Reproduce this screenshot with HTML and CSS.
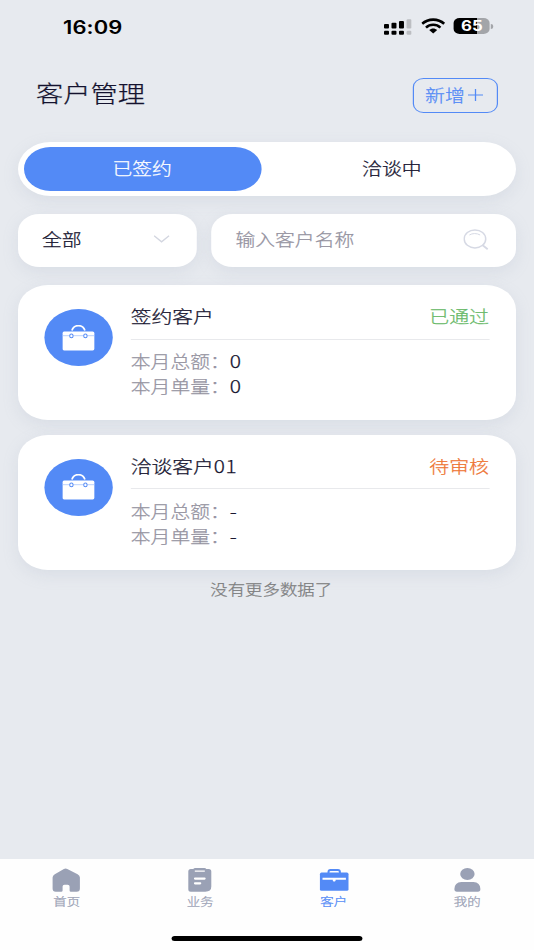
FILE: index.html
```html
<!DOCTYPE html>
<html lang="zh-CN">
  <head>
      <meta charset="UTF-8">
      <meta name="viewport" content="width=device-width, initial-scale=1.0">
      <title>客户管理</title>
      <link rel="stylesheet" href="styles.css">
  </head>
  <body>
      <div class="screen">
          <div class="status-bar">
              <span class="time">16:09</span>
              <div class="status-icons">
                  <svg class="signal" viewBox="0 0 28 16" preserveAspectRatio="none">
                      <g fill="#000">
                          <rect x="0" y="5" width="5" height="4.5" rx="1"/>
                          <rect x="7.5" y="3.8" width="5" height="5.7" rx="1"/>
                          <rect x="15" y="2" width="5" height="7.5" rx="1"/>
                          <rect x="0" y="11.7" width="5" height="4" rx="1"/>
                          <rect x="7.5" y="11.7" width="5" height="4" rx="1"/>
                          <rect x="15" y="11.7" width="5" height="4" rx="1"/>
                      </g>
                      <g fill="#bcbec2">
                          <rect x="22.6" y="0.3" width="5" height="9.2" rx="1.3"/>
                          <rect x="22.6" y="11.7" width="5" height="4" rx="1.3"/>
                      </g>
                  </svg>
                  <svg class="wifi" viewBox="0 0 24 16" preserveAspectRatio="none">
                      <g fill="none" stroke="#000" stroke-width="2.6">
                          <path d="M1 5.8C7 0.2 17 0.2 23 5.8"/>
                          <path d="M4.8 9.6C8.8 5.8 15.2 5.8 19.2 9.6"/>
                      </g>
                      <path d="M8 12C10.2 9.9 13.8 9.9 16 12L12 15.4Z" fill="#000"/>
                  </svg>
                  <div class="battery"><span class="level">65</span><i class="cap"></i></div>
              </div>
          </div>
          <header class="header">
              <h1 class="title">客户管理</h1>
              <button class="add-btn" type="button">新增<svg viewBox="0 0 15 15" preserveAspectRatio="none"><path d="M0 7.5H15M7.5 1V14" fill="none" stroke="currentColor" stroke-width="1.3"/></svg></button>
          </header>
          <main class="main">
              <div class="tabs">
                  <div class="tab active">已签约</div>
                  <div class="tab">洽谈中</div>
              </div>
              <div class="filter">
                  <div class="select">
                      <span>全部</span>
                      <svg class="arrow" viewBox="0 0 16 8" preserveAspectRatio="none"><path d="M0.5 0.8L8 6.8L15.5 0.8" fill="none" stroke="#d3d6e0" stroke-width="1.4"/></svg>
                  </div>
                  <div class="search">
                      <span>输入客户名称</span>
                      <svg class="search-icon" viewBox="0 0 26 21" preserveAspectRatio="none">
                          <g fill="none" stroke="#d6d9e4">
                              <ellipse cx="11.8" cy="9.9" rx="10.8" ry="9" stroke-width="1.5"/>
                              <path d="M6.2 6C9 4.1 14 4.1 17 6" stroke-width="1"/>
                              <path d="M19.2 16L24.6 20.3" stroke-width="1.8"/>
                          </g>
                      </svg>
                  </div>
              </div>
              <div class="card">
                  <div class="avatar">
                      <svg viewBox="0 0 32 26" preserveAspectRatio="none">
                          <path d="M9.5 5.6C11.5 -1 20.5 -1 22.5 5.6" fill="none" stroke="#fff" stroke-width="1.7"/>
                          <rect x="0" y="6.5" width="32" height="19" rx="1.8" fill="#fff"/>
                          <path d="M0 10.7H32" stroke="#a9c5fb" stroke-width="0.8"/>
                          <g fill="#fff" stroke="#538af6" stroke-width="1">
                              <ellipse cx="9" cy="10.9" rx="1.7" ry="1.9"/>
                              <ellipse cx="23" cy="10.9" rx="1.7" ry="1.9"/>
                          </g>
                      </svg>
                  </div>
                  <div class="info">
                      <div class="top">
                          <span class="name">签约客户</span>
                          <span class="state pass">已通过</span>
                      </div>
                      <p class="row">本月总额：<b>0</b></p>
                      <p class="row">本月单量：<b>0</b></p>
                  </div>
              </div>
              <div class="card">
                  <div class="avatar">
                      <svg viewBox="0 0 32 26" preserveAspectRatio="none">
                          <path d="M9.5 5.6C11.5 -1 20.5 -1 22.5 5.6" fill="none" stroke="#fff" stroke-width="1.7"/>
                          <rect x="0" y="6.5" width="32" height="19" rx="1.8" fill="#fff"/>
                          <path d="M0 10.7H32" stroke="#a9c5fb" stroke-width="0.8"/>
                          <g fill="#fff" stroke="#538af6" stroke-width="1">
                              <ellipse cx="9" cy="10.9" rx="1.7" ry="1.9"/>
                              <ellipse cx="23" cy="10.9" rx="1.7" ry="1.9"/>
                          </g>
                      </svg>
                  </div>
                  <div class="info">
                      <div class="top">
                          <span class="name">洽谈客户<span class="num">01</span></span>
                          <span class="state wait">待审核</span>
                      </div>
                      <p class="row">本月总额：<b>-</b></p>
                      <p class="row">本月单量：<b>-</b></p>
                  </div>
              </div>
              <p class="no-more">没有更多数据了</p>
          </main>
          <footer class="footer">
              <nav class="nav">
                  <div class="nav-item">
                      <svg viewBox="0 0 30 24" preserveAspectRatio="none"><path d="M12.3 0.9Q14 0 15.7 0.9L26 6.2Q28.3 7.6 28.3 9.5V20.5Q28.3 23.7 25 23.7H19.3Q18 23.7 18 22.5V18.6Q18 16.8 16 16.8H12.8Q11 16.8 11 18.6V22.5Q11 23.7 9.6 23.7H4.2Q1 23.7 1 20.5V9.5Q1 7.6 3.2 6.2Z" fill="#9aa1b5"/></svg>
                      <span>首页</span>
                  </div>
                  <div class="nav-item">
                      <svg viewBox="0 0 30 24" preserveAspectRatio="none">
                          <path d="M6 1H8.5Q9 0 10.5 0H19.5Q21 0 21.5 1H24Q26.5 1 26.5 3.5V18.5Q26.5 23.7 20.5 23.7H6Q3.5 23.7 3.5 21.2V3.5Q3.5 1 6 1Z" fill="#9aa1b5"/>
                          <path d="M10 3.2H20" stroke="#fff" stroke-width="1.3"/>
                          <path d="M10.2 10.6H19.8M10.2 15.3H15.4" stroke="#fff" stroke-width="2.2" stroke-linecap="round"/>
                      </svg>
                      <span>业务</span>
                  </div>
                  <div class="nav-item current">
                      <svg viewBox="0 0 30 24" preserveAspectRatio="none">
                          <path d="M9.3 5.5V4Q9.3 2 11.3 2H18.7Q20.7 2 20.7 4V5.5" fill="none" stroke="#538af6" stroke-width="2"/>
                          <rect x="0.7" y="4.6" width="28.6" height="18.2" rx="1.6" fill="#538af6"/>
                          <path d="M3.3 9.8H26.7V11.7H16.4V12.7Q15 14.4 13.6 12.7V11.7H3.3Z" fill="#fff"/>
                      </svg>
                      <span>客户</span>
                  </div>
                  <div class="nav-item">
                      <svg viewBox="0 0 30 24" preserveAspectRatio="none">
                          <ellipse cx="15" cy="6" rx="7.2" ry="6" fill="#9aa1b5"/>
                          <path d="M9 14H21Q27.8 14.3 28 21Q28 23.7 25.5 23.7H4.5Q2 23.7 2 21Q2.2 14.3 9 14Z" fill="#9aa1b5"/>
                      </svg>
                      <span>我的</span>
                  </div>
              </nav>
              <div class="home-bar"></div>
          </footer>
      </div>
  </body>
</html>
```
FILE: styles.css
```css
*     {
      box-sizing: border-box;
}
body  {
    margin: 0;
    background-color: #e7eaef;
    overflow: hidden;
    font-family: "Noto Sans CJK SC", sans-serif;
    font-weight: 300;
    color: #14122e;
    -webkit-text-stroke: 0.25px;
}
svg   {
    display: block;
}
/* wide screen: the whole page is stretched sideways */
.screen  {
    width: 445px;
    height: 950px;
    display: flex;
    flex-direction: column;
    transform: scaleX(1.2);
    transform-origin: 0 0;
}
.status-bar  {
    height: 53px;
    padding: 0 34px 0 52.5px;
    display: flex;
    align-items: center;
    justify-content: space-between;
    -webkit-text-stroke: 0;
}
.time  {
    font: 600 18.3px/20px Inter, sans-serif;
    color: #000;
    letter-spacing: 0.1px;
}
.status-icons  {
    display: flex;
    align-items: center;
}
.signal  {
    width: 23.3px;
    height: 16px;
}
.wifi  {
    width: 20px;
    height: 16px;
    margin: -2px 7.5px 0;
}
.battery  {
    display: flex;
    align-items: center;
    margin-top: -1px;
}
.level  {
    width: 29.6px;
    height: 16px;
    border-radius: 5px;
    background: linear-gradient(90deg, #000 65%, #a3a5a9 65%);
    color: #fff;
    text-align: center;
    font: 700 14px/16px Inter, sans-serif;
}
.cap  {
    width: 2px;
    height: 5px;
    margin-left: 1px;
    border-radius: 0 2px 2px 0;
    background: #a3a5a9;
}
.header  {
    height: 89px;
    padding: 25px 30px 0;
    display: flex;
    align-items: flex-start;
    justify-content: space-between;
}
.title  {
    margin: -1px 0 0;
    font-size: 22.7px;
    font-weight: 300;
    line-height: 31px;
}
.add-btn  {
    width: 71px;
    height: 35px;
    padding: 0 2px 2px 0;
    display: flex;
    align-items: center;
    justify-content: center;
    border: 1px solid #538af6;
    border-radius: 9px;
    background: none;
    color: #538af6;
    font: inherit;
    font-size: 16.6px;
}
.add-btn svg  {
    width: 12.5px;
    height: 14px;
    margin: 1px 0 0 3px;
}
.main  {
    flex: 1;
    padding: 0 15px;
}
.tabs, .select, .search, .card  {
    background: #fff;
    box-shadow: 0 5px 15px rgba(150, 160, 185, 0.17);
}
.tabs  {
    height: 53.5px;
    padding: 5px 4.5px;
    display: flex;
    gap: 10px;
    border-radius: 27px;
}
.tab  {
    flex: 1;
    border-radius: 22px;
    text-align: center;
    font-size: 16.5px;
    line-height: 42px;
}
.tab.active  {
    background: #538af6;
    color: #fff;
}
.filter  {
    display: flex;
    gap: 12.2px;
    margin: 18px 0;
    font-size: 16.5px;
}
.select, .search  {
    height: 53.5px;
    display: flex;
    align-items: center;
    justify-content: space-between;
    border-radius: 18px;
    padding: 0 22.5px 2px 20px;
}
.select  {
    width: 149px;
}
.arrow  {
    width: 13.3px;
    height: 8px;
}
.search  {
    flex: 1;
    color: #94929f;
}
.search-icon  {
    width: 21.6px;
    height: 21px;
}
.card  {
    height: 135.3px;
    margin-bottom: 14.7px;
    padding: 0 22.5px 0 22.2px;
    display: flex;
    gap: 15.3px;
    border-radius: 25px;
}
.avatar  {
    width: 56.5px;
    height: 57px;
    margin-top: 24px;
    border-radius: 50%;
    background: #538af6;
    display: flex;
    justify-content: center;
    padding-top: 15.5px;
}
.avatar svg  {
    width: 26.7px;
    height: 26px;
}
.info  {
    flex: 1;
}
.top  {
    height: 54.5px;
    margin-bottom: 9.3px;
    padding-top: 8.4px;
    display: flex;
    align-items: center;
    justify-content: space-between;
    border-bottom: 1.5px solid #e8e9ec;
}
.name  {
    font-size: 17.3px;
}
.num  {
    letter-spacing: 0.6px;
}
.state  {
    font-size: 16.6px;
}
.pass  {
    color: #67b967;
}
.wait  {
    color: #ee7433;
}
.row  {
    margin: 0;
    font-size: 16.5px;
    line-height: 25px;
    color: #94929f;
}
.row b  {
    font-size: 17.5px;
    line-height: 20px;
    font-weight: 300;
    color: #14122e;
}
.no-more  {
    margin: -6px 0 0;
    padding-left: 7px;
    text-align: center;
    font-size: 14.5px;
    line-height: 20px;
    color: #7d7e80;
}
.footer  {
    height: 91px;
    background: #fefefe;
}
.nav  {
    height: 77px;
    display: flex;
    padding-top: 9px;
}
.nav-item  {
    flex: 1;
    display: flex;
    flex-direction: column;
    align-items: center;
    font-size: 11.2px;
    line-height: 18px;
    color: #9aa1b5;
}
.nav-item svg  {
    width: 25px;
    height: 24px;
}
.current  {
    color: #538af6;
}
.home-bar  {
    width: 159px;
    height: 5px;
    margin: 0 auto;
    border-radius: 3px;
    background: #000;
}
```
